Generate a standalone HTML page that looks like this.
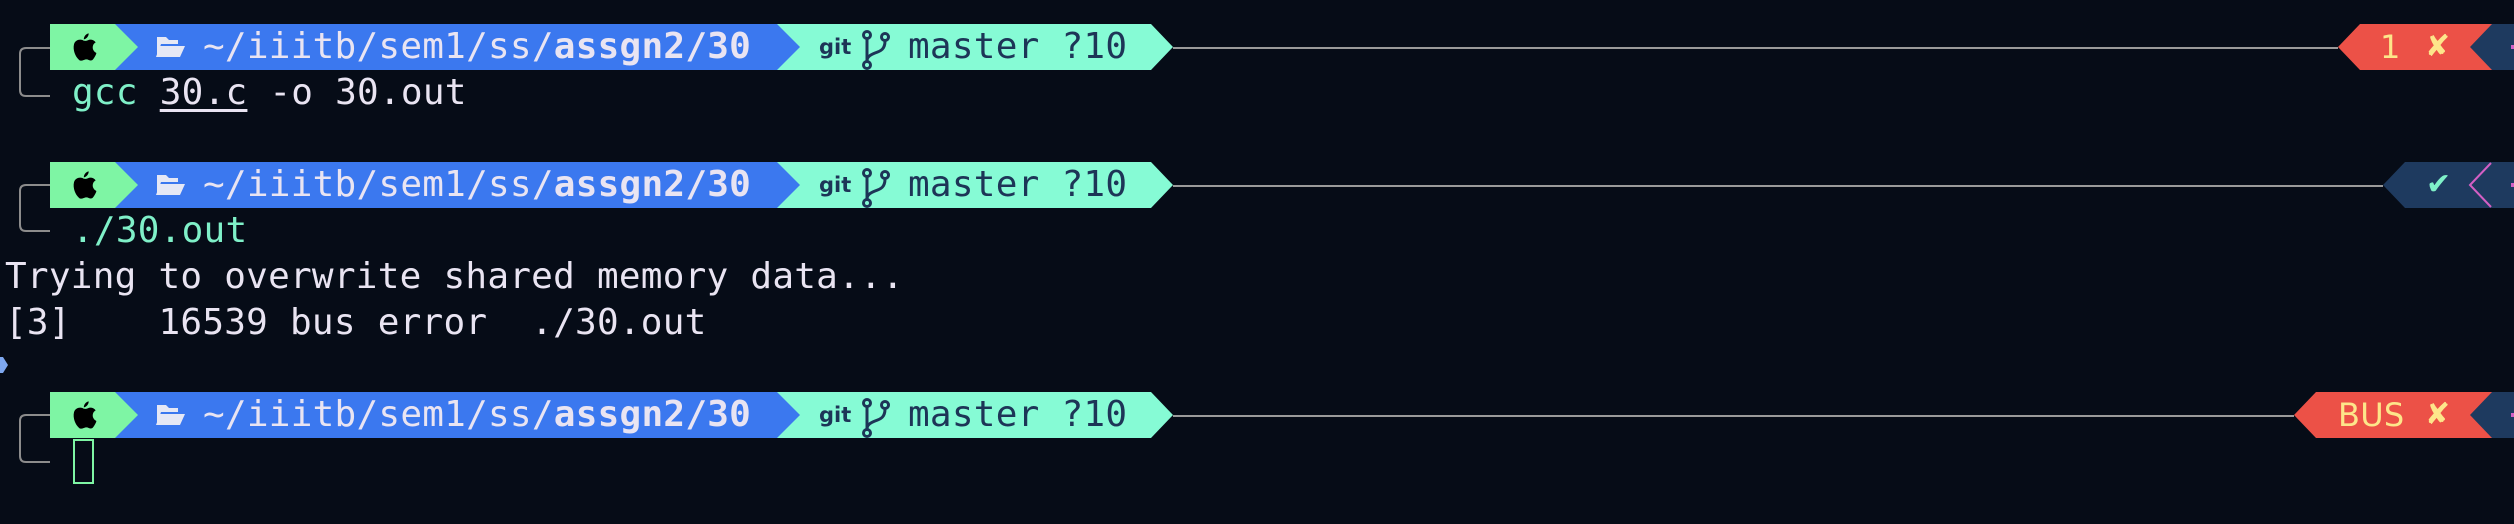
<!DOCTYPE html>
<html><head><meta charset="utf-8"><style>
html,body{margin:0;padding:0;background:#060c17;width:2514px;height:524px;overflow:hidden}
.t{position:absolute;font-family:"DejaVu Sans Mono","Liberation Mono",monospace;font-size:36px;white-space:pre;line-height:46px;color:#e9e4f2;letter-spacing:0.25px}
svg{position:absolute;left:0;top:0}
</style></head><body>
<svg width="2514" height="524" viewBox="0 0 2514 524">
<defs>
<g id="pl">
 <polygon points="777,0 1151,0 1173,23 1151,46 777,46" fill="#86fbd5"/>
 <polygon points="115,0 777,0 800,23 777,46 115,46" fill="#3b78ef"/>
 <polygon points="50,0 115,0 138,23 115,46 50,46" fill="#7ef5a4"/>
 <path transform="translate(67,7) scale(1.4)" d="M12 7c-2-1.5-6-1-7 2.5c-1 4 1 9 3.5 11c1 1 2 .8 3.5.2c1.5-.6 2.5-.6 3.5 0c1.5.6 2.5.5 3.5-1c1-1.3 1.8-3 2-4c-2-1-3-3-2.5-5c.3-1.3 1-2 2-2.6c-1.5-2-4-2.3-5.5-1.5c-1 .5-2 .5-3 .4zM12 6c0-2 1.5-4 3.5-4.3c0 2-1.5 4-3.5 4.3z" fill="#000"/>
 <path d="M157 13h9l3 3h9v4h-17l-4 12zM160 22h25l-5 11h-24z" fill="#e6e8f5"/>
 <text x="819" y="30" font-family="DejaVu Sans,Liberation Sans,sans-serif" font-weight="bold" font-size="21" fill="#1d3557">git</text>
 <g stroke="#1d3557" stroke-width="3" fill="none">
  <circle cx="867" cy="11" r="3.5"/><circle cx="885" cy="13" r="3.5"/><circle cx="867" cy="41" r="3.5"/>
  <path d="M867 15V37M885 17c0 8-4 10-10 12c-5 2-8 4-8 8"/>
 </g>
</g>
</defs>
<path d="M50 48H26q-6 0-6 6V90q0 6 6 6H50M50 185H26q-6 0-6 6V225q0 6 6 6H50M50 415H26q-6 0-6 6V456q0 6 6 6H50" stroke="#8c8c8c" stroke-width="2" fill="none"/>
<use href="#pl" y="24"/><use href="#pl" y="162"/><use href="#pl" y="392"/>
<line x1="1173" y1="48" x2="2338" y2="48" stroke="#9a9a9a" stroke-width="2"/>
<line x1="1173" y1="186" x2="2383" y2="186" stroke="#9a9a9a" stroke-width="2"/>
<line x1="1173" y1="416" x2="2294" y2="416" stroke="#9a9a9a" stroke-width="2"/>
<polygon points="2338,47 2360,24 2514,24 2514,70 2360,70" fill="#ec5147"/>
<polygon points="2470,47 2492,24 2514,24 2514,70 2492,70" fill="#1e3a5f"/>
<polygon points="2383,185 2405,162 2514,162 2514,208 2405,208" fill="#1e3a5f"/>
<polyline points="2491,163 2470,185 2491,207" stroke="#d45fc4" stroke-width="2" fill="none"/>
<polygon points="2294,415 2316,392 2514,392 2514,438 2316,438" fill="#ec5147"/>
<polygon points="2470,415 2492,392 2514,392 2514,438 2492,438" fill="#1e3a5f"/>
<rect x="2511" y="45" width="3" height="4" fill="#d45fc4"/>
<rect x="2511" y="183" width="3" height="4" fill="#d45fc4"/>
<rect x="2511" y="413" width="3" height="4" fill="#d45fc4"/>
<polygon points="0,357 3,357 8,365 3,373 0,373" fill="#7ea8f0"/>
<rect x="74" y="440" width="19" height="43" stroke="#7ef5a4" stroke-width="2" fill="none"/>
</svg>
<div class="t" style="left:203px;top:24px">~/iiitb/sem1/ss/<b>assgn2/30</b></div>
<div class="t" style="left:203px;top:162px">~/iiitb/sem1/ss/<b>assgn2/30</b></div>
<div class="t" style="left:203px;top:392px">~/iiitb/sem1/ss/<b>assgn2/30</b></div>
<div class="t" style="left:908px;top:24px;color:#1d3557">master ?10</div>
<div class="t" style="left:908px;top:162px;color:#1d3557">master ?10</div>
<div class="t" style="left:908px;top:392px;color:#1d3557">master ?10</div>
<div class="t" style="left:72px;top:70px"><span style="color:#7ff0c8">gcc</span> <span style="text-decoration:underline;text-underline-offset:5px">30.c</span> -o 30.out</div>
<div class="t" style="left:72px;top:208px;color:#7ff0c8">./30.out</div>
<div class="t" style="left:5px;top:254px">Trying to overwrite shared memory data...</div>
<div class="t" style="left:5px;top:300px">[3]    16539 bus error  ./30.out</div>
<div class="t" style="left:2380px;top:24px;color:#fde68a;font-family:'DejaVu Sans',sans-serif;font-size:32px">1</div>
<div class="t" style="left:2425px;top:24px;color:#fde68a;font-family:'DejaVu Sans',sans-serif;font-size:30px;font-weight:bold">✘</div>
<div class="t" style="left:2426px;top:162px;color:#7ff0c8;font-family:'DejaVu Sans',sans-serif;font-size:30px;font-weight:bold">✔</div>
<div class="t" style="left:2338px;top:392px;color:#fde68a;font-family:'DejaVu Sans',sans-serif;font-size:32px">BUS</div>
<div class="t" style="left:2425px;top:392px;color:#fde68a;font-family:'DejaVu Sans',sans-serif;font-size:30px;font-weight:bold">✘</div>
</body></html>
